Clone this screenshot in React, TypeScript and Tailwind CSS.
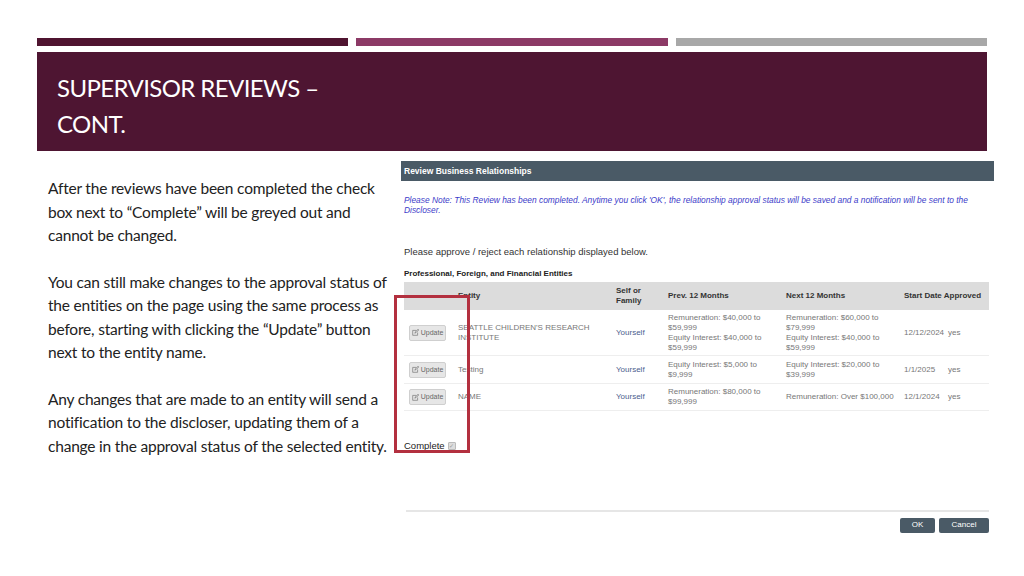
import React from "react";

const Upd = () => (
  <div className="flex items-center gap-[2px] h-[16px] w-[37px] rounded-[2px] bg-[#e6e6e6] border border-[#cfcfcf] text-[7px] text-[#666] justify-center">
    <svg width="7" height="7" viewBox="0 0 10 10" fill="none" stroke="#777" strokeWidth="1">
      <path d="M1 2h5M1 2v7h7V5" />
      <path d="M4 6l1-2 4-4 1 1-4 4z" />
    </svg>
    Update
  </div>
);

const rows = [
  { e: ["SEATTLE CHILDREN'S RESEARCH", "INSTITUTE"], p: ["Remuneration: $40,000 to", "$59,999", "Equity Interest: $40,000 to", "$59,999"], n: ["Remuneration: $60,000 to", "$79,999", "Equity Interest: $40,000 to", "$59,999"], d: "12/12/2024", h: "h-[46px]" },
  { e: ["Testing"], p: ["Equity Interest: $5,000 to", "$9,999"], n: ["Equity Interest: $20,000 to", "$39,999"], d: "1/1/2025", h: "h-[28px]" },
  { e: ["NAME"], p: ["Remuneration: $80,000 to", "$99,999"], n: ["Remuneration: Over $100,000"], d: "12/1/2024", h: "h-[27px]" },
];

export default function App() {
  return (
    <div className="w-[1024px] h-[576px] bg-white relative overflow-hidden" style={{ fontFamily: "Lato, sans-serif" }}>
      <div className="flex gap-[8px] pt-[38px] px-[37px] h-[46px]">
        <div className="flex-1 bg-[#4f1430]" />
        <div className="flex-1 bg-[#8c3a66]" />
        <div className="flex-1 bg-[#a8a8a8]" />
      </div>
      <div className="mx-[37px] mt-[6px] h-[99px] bg-[#4e1532] pl-[20px] pt-[18px] text-white text-[24px] leading-[36px] tracking-[-0.6px]">
        SUPERVISOR REVIEWS –<br />CONT.
      </div>
      <div className="flex">
        <div className="w-[401px] pl-[48px] pr-[14px] pt-[26px] text-[15.5px] leading-[23.5px] text-[#222] tracking-[-0.2px]">
          <p>After the reviews have been completed the check box next to “Complete” will be greyed out and cannot be changed.</p>
          <p className="mt-[23px]">You can still make changes to the approval status of the entities on the page using the same process as before, starting with clicking the “Update” button next to the entity name.</p>
          <p className="mt-[23px]">Any changes that are made to an entity will send a notification to the discloser, updating them of a change in the approval status of the selected entity.</p>
        </div>
        <div className="w-[593px] mt-[10px] text-[8px]" style={{ fontFamily: "'Liberation Sans', sans-serif" }}>
          <div className="h-[20px] bg-[#4a5a66] text-white font-bold text-[8.5px] flex items-center pl-[3px]">Review Business Relationships</div>
          <div className="mt-[14px] px-[3px] text-[#3b3bc9] italic text-[8.4px] leading-[10px]">
            Please Note: This Review has been completed. Anytime you click 'OK', the relationship approval status will be saved and a notification will be sent to the Discloser.
          </div>
          <div className="mt-[30px] px-[3px] text-[9.5px] text-[#333]">Please approve / reject each relationship displayed below.</div>
          <div className="mt-[9px] px-[3px] text-[8px] font-bold text-[#222]">Professional, Foreign, and Financial Entities</div>
          <div className="mt-[2px] ml-[3px] mr-[5px]">
            <div className="h-[28px] bg-[#dcdcdc] flex items-center font-bold text-[8px] text-[#333]">
              <div className="w-[212px] pl-[54px]">Entity</div>
              <div className="w-[52px] leading-[10px]">Self or<br />Family</div>
              <div className="w-[118px]">Prev. 12 Months</div>
              <div className="w-[118px]">Next 12 Months</div>
              <div className="flex-1">Start Date Approved</div>
            </div>
            {rows.map((r, i) => (
              <div key={i} className={`${r.h} flex items-center border-b border-[#eee] text-[8px] text-[#777] leading-[10px]`}>
                <div className="w-[54px] pl-[5px]"><Upd /></div>
                <div className="w-[158px]">{r.e.map((t) => <div key={t}>{t}</div>)}</div>
                <div className="w-[52px] text-[#4a5e8e]">Yourself</div>
                <div className="w-[118px]">{r.p.map((t, j) => <div key={j}>{t}</div>)}</div>
                <div className="w-[118px]">{r.n.map((t, j) => <div key={j}>{t}</div>)}</div>
                <div className="w-[44px]">{r.d}</div>
                <div>yes</div>
              </div>
            ))}
          </div>
          <div className="mt-[28px] pl-[3px] flex items-center gap-[3px] text-[9.5px] text-[#222]">
            Complete
            <span className="w-[8px] h-[8px] bg-[#ddd] border border-[#bbb] rounded-[1px] text-[6px] leading-[6px] text-[#999] flex items-center justify-center">✓</span>
          </div>
          <div className="mt-[56px] mx-[5px] border-t-[2px] border-[#e6e6e6]" />
          <div className="mt-[6px] mr-[5px] flex justify-end gap-[4px]">
            <div className="w-[35px] h-[15px] rounded-[2px] bg-[#4a5a66] text-white text-[8px] flex items-center justify-center">OK</div>
            <div className="w-[50px] h-[15px] rounded-[2px] bg-[#4a5a66] text-white text-[8px] flex items-center justify-center">Cancel</div>
          </div>
        </div>
      </div>
      <div className="absolute left-[394px] top-[295px] w-[76px] h-[158px] border-[3px] border-[#b3303f]" />
    </div>
  );
}
